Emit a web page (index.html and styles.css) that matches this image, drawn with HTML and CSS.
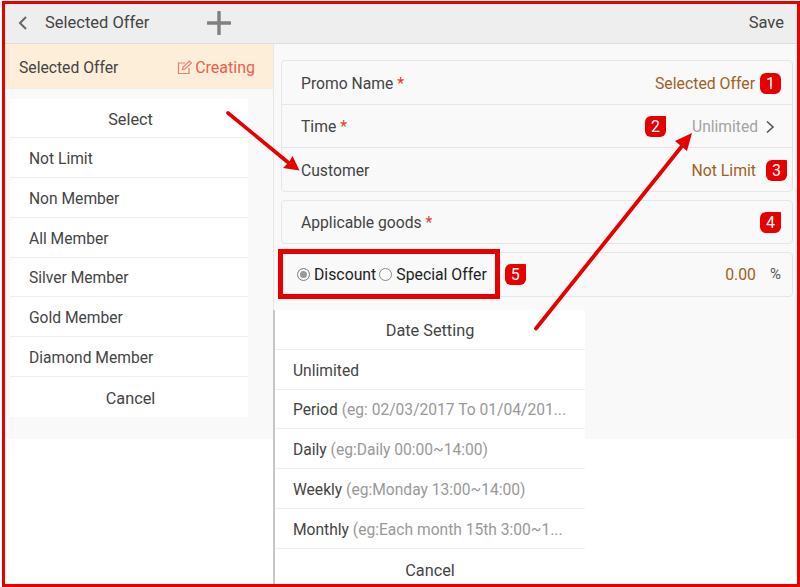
FILE: index.html
```
<!DOCTYPE html>
<html lang="en">
<head>
<meta charset="utf-8">
<title>Selected Offer</title>
<link rel="stylesheet" href="styles.css">
</head>
<body>
<div class="frame">
  <header class="topbar">
    <div class="top-left">
      <svg class="back" width="10" height="16" viewBox="0 0 10 16"><path d="M8 2 2 8l6 6" fill="none" stroke="#666" stroke-width="2"/></svg>
      <span class="top-title">Selected Offer</span>
      <svg class="plus" width="24" height="24" viewBox="0 0 24 24"><path d="M12 1v22M1 12h22" stroke="#808080" stroke-width="3.4" stroke-linecap="round"/></svg>
    </div>
    <span class="save">Save</span>
  </header>
  <div class="main">
    <aside class="side">
      <div class="side-head">
        <span>Selected Offer</span>
        <span class="creating">
          <svg width="15" height="15" viewBox="0 0 15 15"><path d="M12 8v5.5H1.5V3H8" fill="none" stroke="#ee7f6f" stroke-width="1.2"/><path d="M5.5 9.5 6 7.2 12.3 1l2 2L8 9z" fill="none" stroke="#ee7f6f" stroke-width="1.2"/></svg>
          Creating
        </span>
      </div>
      <div class="side-body">
        <div class="sheet">
          <div class="sheet-row center">Select</div>
          <div class="sheet-row">Not Limit</div>
          <div class="sheet-row">Non Member</div>
          <div class="sheet-row">All Member</div>
          <div class="sheet-row">Silver Member</div>
          <div class="sheet-row">Gold Member</div>
          <div class="sheet-row">Diamond Member</div>
          <div class="sheet-row center">Cancel</div>
        </div>
      </div>
    </aside>
    <section class="content">
      <div class="card">
        <div class="row">
          <span>Promo Name <i class="req">*</i></span>
          <span class="row-end"><span class="val">Selected Offer</span><b class="tag tag1">1</b></span>
        </div>
        <div class="row">
          <span>Time <i class="req">*</i></span>
          <span class="row-end"><b class="tag tag2">2</b><span class="muted">Unlimited</span>
            <svg class="chev" width="10" height="14" viewBox="0 0 10 14"><path d="M2 1.5 8 7l-6 5.5" fill="none" stroke="#555" stroke-width="1.6"/></svg></span>
        </div>
        <div class="row">
          <span>Customer</span>
          <span class="row-end"><span class="val">Not Limit</span><b class="tag tag3">3</b></span>
        </div>
      </div>
      <div class="card">
        <div class="row">
          <span>Applicable goods <i class="req">*</i></span>
          <b class="tag">4</b>
        </div>
      </div>
      <div class="card">
        <div class="row row-flat">
          <span class="radios">
            <span class="radio on"></span><span class="radio-label">Discount</span>
            <span class="radio"></span><span class="radio-label">Special Offer</span>
            <b class="tag tag5">5</b>
          </span>
          <span class="row-end"><span class="val">0.00</span><span class="pct">%</span></span>
        </div>
      </div>
      <div class="sheet date-sheet">
        <div class="sheet-row center">Date Setting</div>
        <div class="sheet-row">Unlimited</div>
        <div class="sheet-row">Period <span class="hint">(eg: 02/03/2017 To 01/04/201...</span></div>
        <div class="sheet-row">Daily <span class="hint">(eg:Daily 00:00~14:00)</span></div>
        <div class="sheet-row">Weekly <span class="hint">(eg:Monday 13:00~14:00)</span></div>
        <div class="sheet-row">Monthly <span class="hint">(eg:Each month 15th 3:00~1...</span></div>
        <div class="sheet-row center">Cancel</div>
      </div>
    </section>
  </div>
  <div class="callout"></div>
  <svg class="arrows" width="800" height="587" viewBox="0 0 800 587">
    <path d="M228 113 290 164" stroke="#e60000" stroke-width="3.6" stroke-linecap="round" fill="none"/>
    <path d="M299.500 170.500 283 168 289 162 292.500 156z" fill="#e60000"/>
    <path d="M536 328.500 682 146" stroke="#e60000" stroke-width="3.8" stroke-linecap="round" fill="none"/>
    <path d="M692 133 687 151 681 146 675 141z" fill="#e60000"/>
  </svg>
</div>
</body>
</html>
```
FILE: styles.css
```
* { box-sizing: border-box; }
html, body { margin: 0; height: 100%; }
body { font-family: Roboto, "Liberation Sans", sans-serif; font-size: 15.7px; color: #444; background: #fff; }
.frame { position: relative; width: 798px; height: 586px; margin: 1px 0 0 2px; overflow: hidden; display: flex; flex-direction: column; border: 3px solid #e60000; }
.topbar { height: 40px; flex: none; display: flex; align-items: center; justify-content: space-between; background: #eee; border-bottom: 1px solid #ddd; padding: 0 13px 2px 13px; font-size: 16.5px; }
.top-left { display: flex; align-items: center; }
.top-title { margin-left: 17px; }
.plus { margin-left: 58px; }
.main { height: 395px; flex: none; display: flex; }
.side { width: 269px; flex: none; border-right: 1px solid #e6e6e6; }
.side-head { height: 45px; display: flex; align-items: center; justify-content: space-between; padding: 2px 18px 0 14px; background: #fdeed9; border-bottom: 1px solid #eee; }
.creating { color: #e8604f; display: flex; align-items: center; gap: 3px; font-size: 16px; }
.side-body { height: 350px; padding: 9.500px 25px 0 5px; background: #f9f9f9; }
.sheet { background: #fff; }
.sheet-row { height: 39.800px; display: flex; align-items: center; padding: 2.500px 19px 0; border-bottom: 1px solid #eee; white-space: pre; overflow: hidden; font-size: 15.600px; }
.sheet-row:last-child { border-bottom: 0; }
.sheet-row.center { justify-content: center; font-size: 16.300px; padding-left: 22px; }
.content { flex: 1; position: relative; background: #f9f9f9; padding: 16px 4px 0 7px; }
.card { border: 1px solid #e6e6e6; border-radius: 4px; margin-bottom: 8px; }
.row { height: 43.500px; display: flex; align-items: center; justify-content: space-between; padding: 1.500px 11px 0 19px; border-bottom: 1px solid #e6e6e6; }
.row:last-child { height: 42.500px; border-bottom: 0; }
.row-flat { padding-top: 0; }
.req { color: #e5392c; font-style: normal; }
.row-end { display: flex; align-items: center; }
.val { color: #a2601f; font-size: 15.800px; }
.muted { color: #a3a3a3; font-size: 15.600px; }
.tag { width: 21px; height: 21px; display: flex; align-items: center; justify-content: center; background: #e60000; color: #fff; font-weight: 400; font-size: 16px; border-radius: 6px 1px 6px 6px; }
.tag1 { border-radius: 6px; }
.row-end .tag { margin-left: 5px; }
.row-end .tag2 { margin: 0 26px 0 0; }
.row-end .tag3 { margin: 0 -6px 0 10px; }
.chev { margin: 0 6px 0 7px; }
.radios { display: flex; align-items: center; color: #222; margin-left: -4px; font-size: 15.800px; }
.radio { width: 13px; height: 13px; border: 1px solid #888; border-radius: 50%; background: #fff; margin-right: 4px; }
.radio.on { background: #999; box-shadow: inset 0 0 0 2px #fff; }
.radio-label { margin-right: 3px; }
.tag5 { margin-left: 15px; }
.pct { color: #555; font-size: 15px; margin-left: 14px; }
.date-sheet { position: absolute; left: -1px; top: 266px; width: 312px; height: 277px; border-left: 2px solid #c6c6c6; }
.date-sheet .sheet-row { padding-left: 18px; padding-right: 18px; padding-top: 3px; }
.date-sheet .sheet-row.center { padding-left: 18px; }
.hint { color: #999; }
.callout { position: absolute; left: 273px; top: 245px; width: 222px; height: 50px; border: 5px solid #e60000; }
.arrows { position: absolute; left: -5px; top: -4px; }
```
